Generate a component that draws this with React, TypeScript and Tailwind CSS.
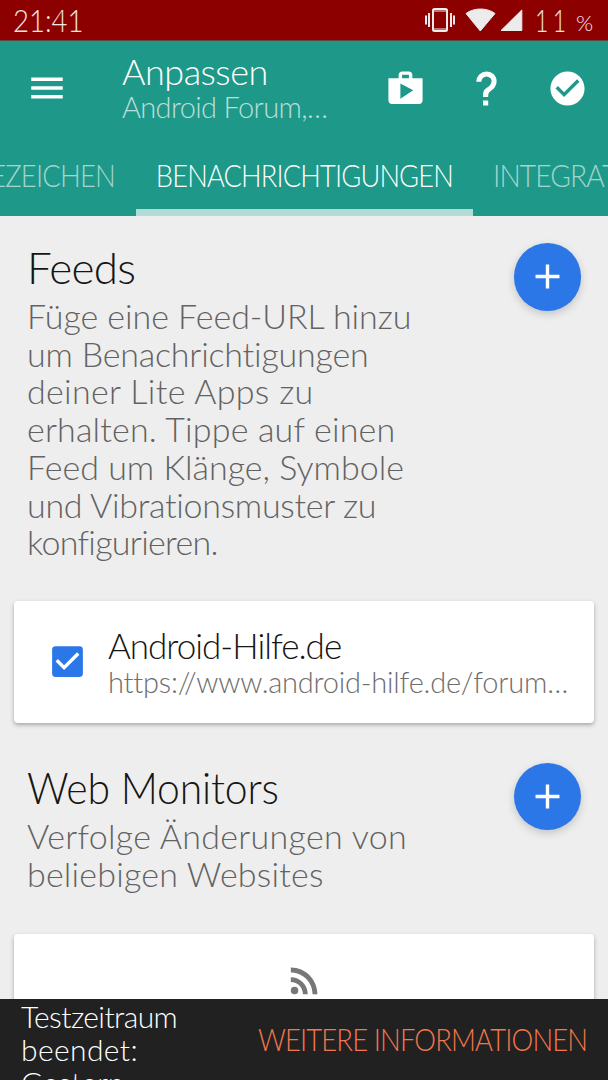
import React from 'react';
import { MdAdd, MdCheckBox, MdCheckCircle, MdMenu, MdRssFeed, MdShop } from 'react-icons/md';

interface TextLine {
  text: string;
  className: string;
}

interface SectionHeaderProps {
  title: TextLine;
  lines: TextLine[];
}

const feedLines: TextLine[] = [
  { text: 'Füge eine Feed-URL hinzu', className: 'tracking-[-0.05px]' },
  { text: 'um Benachrichtigungen', className: 'tracking-[-0.2px]' },
  { text: 'deiner Lite Apps zu', className: 'tracking-[0.33px]' },
  { text: 'erhalten. Tippe auf einen', className: 'tracking-[0.17px]' },
  { text: 'Feed um Klänge, Symbole', className: 'tracking-[0px]' },
  { text: 'und Vibrationsmuster zu', className: 'tracking-[-0.3px]' },
  { text: 'konfigurieren.', className: 'tracking-[-0.7px]' },
];

const monitorLines: TextLine[] = [
  { text: 'Verfolge Änderungen von', className: 'tracking-[0.3px]' },
  { text: 'beliebigen Websites', className: 'tracking-[0.2px]' },
];

const HelpIcon: React.FC = () => (
  <svg viewBox="0 0 24 24" className="size-[41px]" fill="currentColor">
    <path d="M10,19H13V22H10V19M12,2C17.35,2.22 19.68,7.62 16.5,11.67C15.67,12.67 14.33,13.33 13.67,14.17C13,15 13,16 13,17H10C10,15.33 10,13.92 10.67,12.92C11.33,11.92 12.67,11.33 13.5,10.67C15.92,8.43 15.32,5.26 12,5A3,3 0 0,0 9,8H6A6,6 0 0,1 12,2Z" />
  </svg>
);

const StatusBar: React.FC = () => (
  <div className="flex h-[41px] shrink-0 items-center justify-between border-b border-[#5b4a42] bg-[#8c0000] pl-[13px] text-[32px] text-white/90">
    <span className="origin-left scale-x-[0.86]">21:41</span>
    <div className="flex w-[183px] items-center">
      <svg viewBox="0 0 98 26" className="h-[26px] w-[98px] shrink-0" fill="#ececec">
        <rect x="8" y="2" width="14" height="22" rx="1.5" fill="none" stroke="#ececec" strokeWidth="2" />
        <path d="M8 4h14M8 22h14" stroke="#ececec" strokeWidth="1" />
        <path d="M4 6v14M26 6v14M1 8.500v9M29 8.500v9" stroke="#ececec" strokeWidth="2" />
        <path d="M41 6.500C49 0.500 62 0.500 70 6.500L55.300 24z" strokeLinejoin="round" stroke="#ececec" />
        <path d="M76 23.500L96.800 3v20.500z" strokeLinejoin="round" stroke="#ececec" />
      </svg>
      <span className="ml-[12px] w-[41px] origin-left scale-x-[0.72] tracking-[6px]">11</span>
      <span className="pt-1 text-[22px]">%</span>
    </div>
  </div>
);

const Toolbar: React.FC = () => (
  <header className="flex h-[175px] shrink-0 flex-col bg-[#1e9888] text-white">
    <div className="flex h-[94px] items-center">
      <MdMenu className="ml-[26px] size-[42px] shrink-0" />
      <div className="ml-[54px] flex w-[263px] flex-col pb-px">
        <span className="text-[36px] leading-[38px] tracking-[-0.5px]">Anpassen</span>
        <span className="text-[29px] leading-[33px] tracking-[-0.65px] text-white/70">Android Forum,…</span>
      </div>
      <MdShop className="size-[41px] shrink-0" />
      <span className="ml-10 shrink-0"><HelpIcon /></span>
      <MdCheckCircle className="ml-10 size-[41px] shrink-0" />
    </div>
    <nav className="flex h-[81px] overflow-hidden whitespace-nowrap text-[32px] leading-[80px]">
      <div className="flex w-[136px] shrink-0 justify-end pr-[21px] text-white/60">
        <span className="origin-right scale-x-[0.86] tracking-[-1px]">LESEZEICHEN</span>
      </div>
      <div className="flex w-[337px] shrink-0 justify-center border-b-[7px] border-[#b4dcd7]">
        <span className="scale-x-[0.852] tracking-[-1px]">BENACHRICHTIGUNGEN</span>
      </div>
      <div className="flex w-[135px] shrink-0 pl-[20px] text-white/60">
        <span className="origin-left scale-x-[0.88] tracking-[-1px]">INTEGRATION</span>
      </div>
    </nav>
  </header>
);

const SectionHeader: React.FC<SectionHeaderProps> = ({ title, lines }) => (
  <div className="flex items-start justify-between px-[27px]">
    <div className="-mt-[2px] whitespace-nowrap pb-[3px]">
      <h2 className="text-[44px] leading-[52px] text-[#151515]"><span className={title.className}>{title.text}</span></h2>
      <p className="mt-[4px] text-[34px] leading-[37.700px] text-[#626262]">
        {lines.map(line => (
          <span key={line.text} className="block"><span className={line.className}>{line.text}</span></span>
        ))}
      </p>
    </div>
    <button aria-label="Hinzufügen" className="flex size-[67.500px] shrink-0 items-center justify-center rounded-full bg-[#2b77e7] text-white shadow-[0_3px_8px_rgba(0,0,0,0.18)]">
      <MdAdd className="size-[41px]" />
    </button>
  </div>
);

export default function App() {
  return (
    <div className="flex h-[1080px] w-[608px] flex-col overflow-hidden bg-[#eeeeee] font-['Lato',sans-serif] font-light [font-variant-ligatures:none]">
      <StatusBar />
      <Toolbar />
      <main className="flex-1 overflow-hidden pt-[27px]">
        <SectionHeader title={{ text: 'Feeds', className: 'tracking-[-0.7px]' }} lines={feedLines} />
        <div className="mx-[14px] mt-[37px] flex h-[122px] items-center rounded bg-white pl-[33px] shadow-[0_2px_4px_rgba(0,0,0,0.3)]">
          <MdCheckBox className="size-[41px] shrink-0 text-[#2b77e7]" />
          <div className="ml-5 whitespace-nowrap">
            <div className="text-[35px] leading-[39px] tracking-[-1px] text-[#151515]">Android-Hilfe.de</div>
            <div className="text-[29px] leading-[33px] tracking-[-0.2px] text-[#6e6e6e]">https://www.android-hilfe.de/forum…</div>
          </div>
        </div>
        <div className="pt-[40px]">
          <SectionHeader title={{ text: 'Web Monitors', className: 'inline-block origin-left scale-x-[0.93] tracking-[-0.2px]' }} lines={monitorLines} />
        </div>
        <div className="mx-[14px] mt-[39px] flex h-[122px] justify-center rounded bg-white pt-[26px] shadow-[0_2px_4px_rgba(0,0,0,0.3)]">
          <MdRssFeed className="size-[41px] text-[#777777]" />
        </div>
      </main>
      <footer className="flex h-[81px] shrink-0 justify-between overflow-hidden whitespace-nowrap bg-[#212121] px-[21px]">
        <div className="pt-px text-[30px] leading-[33px] text-white">
          <div className="tracking-[-0.6px]">Testzeitraum</div>
          <div className="tracking-[0.4px]">beendet:</div>
          <div>Gestern</div>
        </div>
        <span className="origin-right scale-x-[0.857] text-[32px] leading-[80px] tracking-[-1px] text-[#f4764c]">WEITERE INFORMATIONEN</span>
      </footer>
    </div>
  );
}
